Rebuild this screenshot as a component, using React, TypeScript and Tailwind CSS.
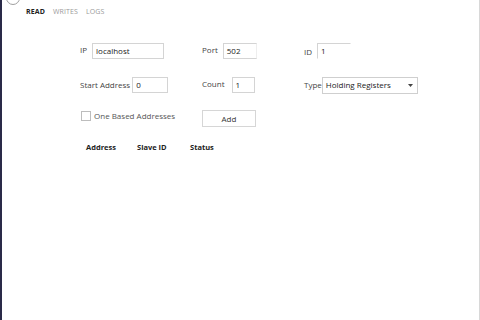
import React from 'react';

const font = { fontFamily: '"Open Sans", "Noto Sans", Arial, sans-serif' };

function Field({ value, className }: { value: string; className: string }) {
  return (
    <div className={`h-[16px] border border-[#d4d4d4] bg-white pl-[3px] flex items-center text-[8px] text-[#222] ${className}`}>
      {value}
    </div>
  );
}

export default function App() {
  return (
    <div className="w-[480px] h-[320px] flex bg-white overflow-hidden" style={font}>
      <div className="w-[2px] bg-[#2a2a48] shrink-0" />
      <div className="flex-1 relative flex flex-col">
        {/* back button, mostly off the top */}
        <svg className="absolute left-[3px] top-[-10px]" width="16" height="16" viewBox="0 0 16 16">
          <circle cx="8" cy="8" r="6.5" fill="none" stroke="#a0a0a0" strokeWidth="1" />
        </svg>

        <div className="flex gap-[8px] pl-[24px] pt-[7px] text-[7px] leading-[10px] tracking-[0.1px]">
          <span className="font-bold text-[#222]">READ</span>
          <span className="text-[#9a9a9a]">WRITES</span>
          <span className="text-[#9a9a9a]">LOGS</span>
        </div>

        <div className="pl-[78px] pt-[26px] flex flex-col text-[8px] text-[#444]">
          {/* row 1 */}
          <div className="flex h-[16px]">
            <div className="w-[122px] flex items-start gap-[5px]">
              <span className="pt-[1px]">IP</span>
              <Field value="localhost" className="w-[72px]" />
            </div>
            <div className="w-[102px] flex items-start gap-[5px]">
              <span className="pt-[1px]">Port</span>
              <Field value="502" className="w-[34px] border-r-[#eee]" />
            </div>
            <div className="flex items-start gap-[5px]">
              <span className="pt-[3px]">ID</span>
              <Field value="1" className="w-[34px] border-r-transparent border-b-transparent" />
            </div>
          </div>

          {/* row 2 */}
          <div className="flex h-[16px] mt-[18px]">
            <div className="w-[122px] flex items-center gap-[2px]">
              <span className="-mt-[1px]">Start Address</span>
              <Field value="0" className="w-[36px]" />
            </div>
            <div className="w-[102px] flex items-center gap-[7px]">
              <span className="-mt-[2px]">Count</span>
              <Field value="1" className="w-[23px]" />
            </div>
            <div className="flex items-center gap-0">
              <span className="-mt-[1px]">Type</span>
              <div className="h-[17px] w-[96px] border border-[#cfcfcf] bg-white flex items-center justify-between pl-[3px] pr-[4px] text-[#222]">
                <span>Holding Registers</span>
                <svg width="5" height="3" viewBox="0 0 5 3">
                  <path d="M0 0h5L2.5 3z" fill="#444" />
                </svg>
              </div>
            </div>
          </div>

          {/* row 3 */}
          <div className="flex h-[17px] mt-[17px]">
            <div className="w-[122px] flex items-start gap-[3px]">
              <div className="w-[10px] h-[10px] border border-[#bdbdbd] bg-white mt-[1px] ml-[1px]" />
              <span className="text-[#555] leading-[12px]">One Based Addresses</span>
            </div>
            <div className="w-[54px] h-[17px] border border-[#d6d6d6] bg-white flex items-center justify-center text-[#333]">
              Add
            </div>
          </div>

          {/* table header */}
          <div className="flex mt-[15px] pl-[6px] text-[7.5px] font-bold text-[#222]">
            <span className="w-[51px]">Address</span>
            <span className="w-[53px]">Slave ID</span>
            <span>Status</span>
          </div>
        </div>
      </div>
      <div className="w-[1px] bg-[#d8d8d8] shrink-0" />
    </div>
  );
}
